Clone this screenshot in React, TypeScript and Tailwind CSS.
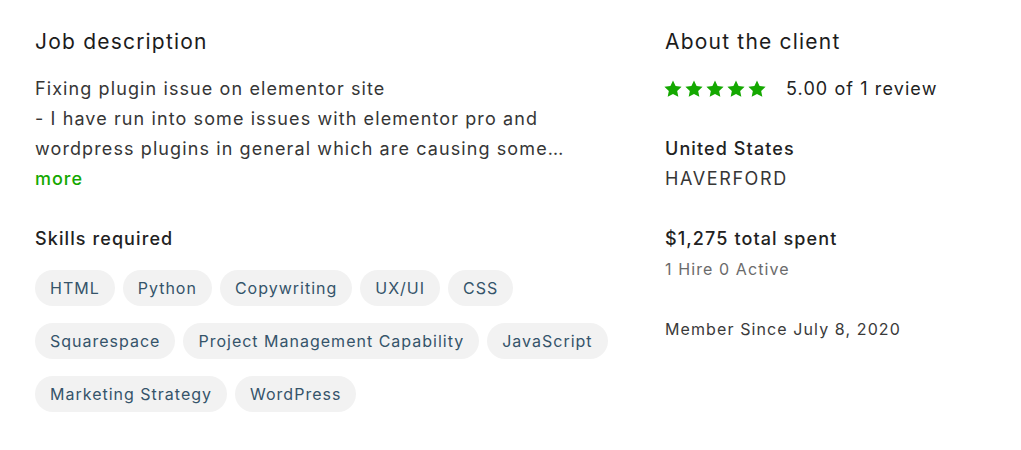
const skills = [
  "HTML",
  "Python",
  "Copywriting",
  "UX/UI",
  "CSS",
  "Squarespace",
  "Project Management Capability",
  "JavaScript",
  "Marketing Strategy",
  "WordPress",
]

const description =
  "Fixing plugin issue on elementor site\n- I have run into some issues with elementor pro and\nwordpress plugins in general which are causing some…"

const Star = () => (
  <svg viewBox="0 0 24 24" className="w-[20px] h-[20px] fill-[#14a800]">
    <path d="M12 1.8l3.1 6.6 7.2.9-5.3 5 1.4 7.1L12 17.9l-6.4 3.5 1.4-7.1-5.3-5 7.2-.9z" />
  </svg>
)

const App = () => {
  return (
    <div className="flex pl-[35px] pt-[27px] bg-white min-h-[450px] font-['Inter',sans-serif] text-[18px] leading-[30px] tracking-[1.1px] text-[#363636]">
      <div className="w-[580px] flex flex-col">
        <h2 className="text-[21px] leading-[30px] tracking-[1.2px] text-[#1c1c1c]">Job description</h2>
        <p className="mt-[17px] whitespace-pre-line">{description}</p>
        <button className="w-fit text-[#14a800] font-medium tracking-[1px]">more</button>

        <h3 className="mt-[30px] font-medium text-[#222]">Skills required</h3>
        <div className="mt-[16px] flex flex-wrap gap-x-[8px] gap-y-[17px]">
          {skills.map((s) => (
            <span
              key={s}
              className="h-[36px] px-[15px] flex items-center rounded-full bg-[#f2f2f2] text-[16px] tracking-[1px] text-[#35546a]"
            >
              {s}
            </span>
          ))}
        </div>
      </div>

      <div className="ml-[50px] flex flex-col">
        <h2 className="text-[21px] leading-[30px] tracking-[1.2px] text-[#1c1c1c]">About the client</h2>
        <div className="mt-[17px] flex items-center">
          <div className="flex gap-[1px] -ml-[2px]">
            <Star />
            <Star />
            <Star />
            <Star />
            <Star />
          </div>
          <span className="ml-[19px] text-[#222]">5.00 of 1 review</span>
        </div>

        <div className="mt-[30px] font-medium text-[#222]">United States</div>
        <div className="tracking-[1.6px]">HAVERFORD</div>

        <div className="mt-[30px] font-medium text-[#222]">$1,275 total spent</div>
        <div className="text-[16px] text-[#6b6b6b]">1 Hire 0 Active</div>

        <div className="mt-[30px] text-[16px] text-[#3a3a3a]">Member Since July 8, 2020</div>
      </div>
    </div>
  )
}

export default App
